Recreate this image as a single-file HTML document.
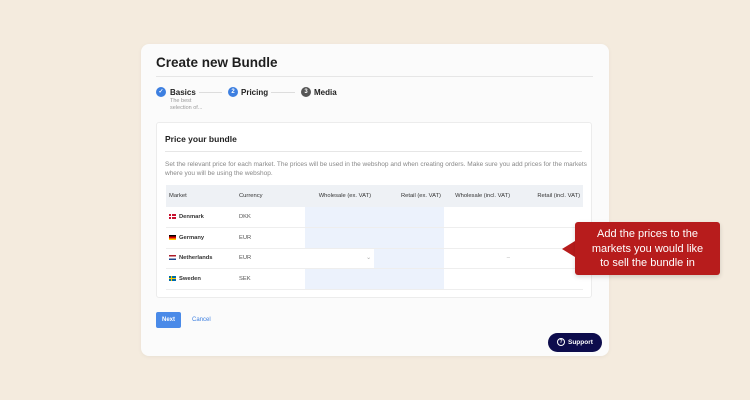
<!DOCTYPE html>
<html><head><style>
*{box-sizing:border-box;margin:0;padding:0}
body{width:750px;height:400px;background:#f4ebde;font-family:"Liberation Sans",sans-serif;position:relative;overflow:hidden;color:#222}
.card{position:absolute;left:141px;top:44px;width:468px;height:312px;background:#fbfbfb;border-radius:8px;box-shadow:0 1px 4px rgba(0,0,0,.05)}
.abs{position:absolute}
h1{position:absolute;left:15px;top:11px;font-size:13.5px;font-weight:bold;color:#1e1e1e}
.line{position:absolute;height:1px;background:#e6e6e6}
.circ{position:absolute;width:10px;height:10px;border-radius:50%;color:#fff;font-size:6px;text-align:center;line-height:10px;font-weight:bold}
.st{position:absolute;font-size:8px;font-weight:bold;color:#222}
.inner{position:absolute;left:15px;top:78px;width:436px;height:176px;background:#fff;border:1px solid #ececec;border-radius:3px}
table{position:absolute;left:9px;top:62px;width:417px;border-collapse:collapse;font-size:5.8px}
th{height:22px;background:#eef1f5;font-weight:normal;color:#333;text-align:left;padding:0 3px}
td{height:20.5px;border-bottom:1px solid #eee;color:#555;padding:0 3px}
.r{text-align:right}
.b{background:#ecf2fc}
.flag{display:inline-block;width:7px;height:5px;vertical-align:middle;margin-right:3px}
td.m{color:#333;font-weight:bold}
</style></head><body>
<div class="card">
<h1>Create new Bundle</h1>
<div class="line" style="left:15px;top:32px;width:437px"></div>
<div class="circ" style="left:15px;top:43px;background:#3d7fe0">✓</div>
<div class="st" style="left:29px;top:44px">Basics</div>
<div class="abs" style="left:29px;top:54px;font-size:5.5px;color:#999;line-height:7px">The best<br>selection of...</div>
<div class="line" style="left:58px;top:48px;width:23px;background:#ddd"></div>
<div class="circ" style="left:87px;top:43px;background:#3d7fe0">2</div>
<div class="st" style="left:100px;top:44px">Pricing</div>
<div class="line" style="left:130px;top:48px;width:24px;background:#ddd"></div>
<div class="circ" style="left:160px;top:43px;background:#555">3</div>
<div class="st" style="left:173px;top:44px">Media</div>
<div class="inner">
<div class="abs" style="left:8px;top:11px;font-size:8.5px;font-weight:bold;color:#222">Price your bundle</div>
<div class="line" style="left:8px;top:28px;width:417px"></div>
<div class="abs" style="left:8px;top:37px;width:430px;font-size:6.5px;color:#888;line-height:9px;white-space:nowrap">Set the relevant price for each market. The prices will be used in the webshop and when creating orders. Make sure you add prices for the markets<br>where you will be using the webshop.</div>
<table>
<tr><th style="width:70px">Market</th><th style="width:69px">Currency</th><th class="r" style="width:69px">Wholesale (ex. VAT)</th><th class="r" style="width:70px">Retail (ex. VAT)</th><th class="r" style="width:69px">Wholesale (incl. VAT)</th><th class="r">Retail (incl. VAT)</th></tr>
<tr><td class="m"><span class="flag" style="background:linear-gradient(90deg,transparent 2px,#fff 2px,#fff 3px,transparent 3px),linear-gradient(transparent 2px,#fff 2px,#fff 3px,transparent 3px),#c8102e"></span>Denmark</td><td>DKK</td><td class="b"></td><td class="b"></td><td></td><td></td></tr>
<tr><td class="m"><span class="flag" style="background:linear-gradient(#000 33%,#d00 33%,#d00 66%,#fc0 66%)"></span>Germany</td><td>EUR</td><td class="b"></td><td class="b"></td><td></td><td></td></tr>
<tr><td class="m"><span class="flag" style="background:linear-gradient(#ae1c28 33%,#fff 33%,#fff 66%,#21468b 66%)"></span>Netherlands</td><td>EUR</td><td class="r" style="color:#aaa">⌄</td><td class="b"></td><td class="r" style="color:#aaa">–</td><td></td></tr>
<tr><td class="m"><span class="flag" style="background:linear-gradient(90deg,transparent 2px,#fc0 2px,#fc0 3px,transparent 3px),linear-gradient(transparent 2px,#fc0 2px,#fc0 3px,transparent 3px),#006aa7"></span>Sweden</td><td>SEK</td><td class="b"></td><td class="b"></td><td></td><td></td></tr>
</table>
</div>
<div class="abs" style="left:15px;top:268px;width:25px;height:16px;background:#4a8ae8;border-radius:2px;color:#fff;font-size:6px;font-weight:bold;text-align:center;line-height:16px">Next</div>
<div class="abs" style="left:51px;top:273px;font-size:6px;color:#3d7fe0">Cancel</div>
<div class="abs" style="left:407px;top:289px;width:54px;height:19px;background:#0d0c4c;border-radius:10px;color:#fff;font-size:6.5px;font-weight:bold;line-height:19px;padding-left:9px"><span style="display:inline-block;width:8px;height:8px;border:1px solid #fff;border-radius:50%;font-size:5px;line-height:6px;text-align:center;vertical-align:middle;margin-right:3px">?</span>Support</div>
</div>
<div class="abs" style="left:562px;top:241px;width:0;height:0;border-top:8px solid transparent;border-bottom:8px solid transparent;border-right:13px solid #b71c1c"></div>
<div class="abs" style="left:575px;top:222px;width:145px;height:53px;background:#b71c1c;border-radius:3px;color:#fff;font-size:11px;text-align:center;line-height:14.5px;padding-top:5px;box-shadow:0 2px 5px rgba(0,0,0,.15)">Add the prices to the<br>markets you would like<br>to sell the bundle in</div>
</body></html>
